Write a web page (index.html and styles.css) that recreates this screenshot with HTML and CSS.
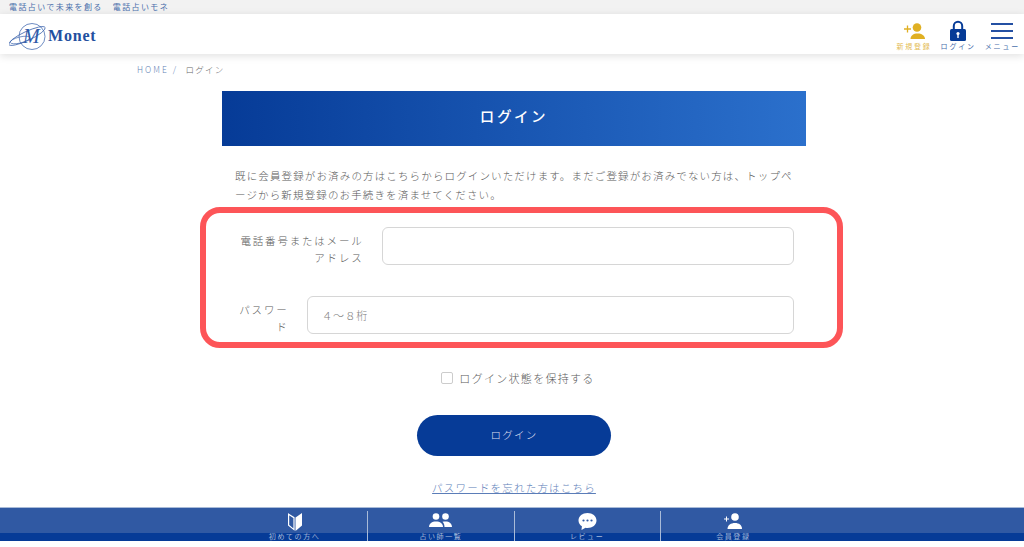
FILE: index.html
```html
<!DOCTYPE html>
<html lang="ja">
<head>
    <meta charset="UTF-8">
    <meta name="viewport" content="width=device-width, initial-scale=1.0">
    <title>ログイン | 電話占いモネ</title>
    <link rel="stylesheet" href="styles.css">
</head>
<body>
    <div class="topbar">
        <span>電話占いで未来を創る</span>
        <span>電話占いモネ</span>
    </div>

    <header class="header">
        <a class="logo" href="#">
            <svg class="logo-mark" width="38" height="28" viewBox="0 0 38 28">
                <circle cx="23" cy="14.500" r="13" fill="none" stroke="#2f5aa8" stroke-width="0.7"/>
                <ellipse cx="18" cy="14" rx="20" ry="4.500" fill="none" stroke="#2f5aa8" stroke-width="0.7" transform="rotate(-25 18 14)"/>
                <ellipse cx="11" cy="18" rx="10" ry="3" fill="none" stroke="#2f5aa8" stroke-width="0.6" transform="rotate(-14 11 18)"/>
                <text class="logo-m" x="14" y="21">M</text>
            </svg>
            <span class="logo-text">Monet</span>
        </a>
        <nav class="header-nav">
            <a class="header-link is-gold" href="#">
                <svg width="22" height="22" viewBox="0 0 22 22">
                    <circle cx="14" cy="7.500" r="4.300" fill="#e0b023"/>
                    <path d="M7.500 19c0-3.500 3-5.500 7-5.500s7.500 2 7.500 5.500z" fill="#e0b023"/>
                    <path d="M1 9h7M4.500 5.500v7" stroke="#e0b023" stroke-width="1.300"/>
                </svg>
                <span>新規登録</span>
            </a>
            <a class="header-link" href="#">
                <svg width="18" height="22" viewBox="0 0 18 22">
                    <path d="M4.800 10V6a4.200 4.200 0 0 1 8.400 0v4" fill="none" stroke="#063b97" stroke-width="2"/>
                    <rect x="1" y="9" width="16" height="12" rx="1.500" fill="#063b97"/>
                    <circle cx="9" cy="13.500" r="1.600" fill="#fff"/>
                    <rect x="8.300" y="13.500" width="1.400" height="4.500" fill="#fff"/>
                </svg>
                <span>ログイン</span>
            </a>
            <a class="header-link" href="#">
                <svg width="22" height="22" viewBox="0 0 22 22">
                    <path d="M0 4h22M0 11h22M0 18h22" stroke="#2450a3" stroke-width="2"/>
                </svg>
                <span>メニュー</span>
            </a>
        </nav>
    </header>

    <div class="breadcrumb"><a href="#">HOME</a><i>/</i><span>ログイン</span></div>

    <main class="main">
        <h1 class="title">ログイン</h1>
        <p class="lead">既に会員登録がお済みの方はこちらからログインいただけます。まだご登録がお済みでない方は、トップページから新規登録のお手続きを済ませてください。</p>

        <form class="login-form">
            <div class="highlight">
                <div class="field">
                    <label class="field-label label-wide" for="tel">電話番号またはメールアドレス</label>
                    <input class="field-input" type="text" id="tel">
                </div>
                <div class="field">
                    <label class="field-label label-narrow" for="pass">パスワード</label>
                    <input class="field-input" type="password" id="pass" placeholder="４～８桁">
                </div>
            </div>

            <label class="remember"><span class="check"></span>ログイン状態を保持する</label>
            <button class="submit" type="button">ログイン</button>
            <a class="forgot" href="#">パスワードを忘れた方はこちら</a>
        </form>
    </main>

    <nav class="footer-nav">
        <div class="footer-items">
            <a class="footer-item" href="#">
                <svg width="14" height="18" viewBox="0 0 14 18">
                    <path d="M.6 1.200L6 4.700v11.900L.6 12.200z" fill="none" stroke="#fff" stroke-width="1.200"/>
                    <path d="M7.500 4.500L14 0v12.500L7.500 18z" fill="#fff"/>
                </svg>
                <span>初めての方へ</span>
            </a>
            <a class="footer-item" href="#">
                <svg width="23" height="14" viewBox="0 0 23 14">
                    <circle cx="7" cy="3.500" r="3.300" fill="#fff"/>
                    <circle cx="16.500" cy="3.500" r="3.300" fill="#fff"/>
                    <path d="M0 14c0-3.500 3-5.500 7-5.500s7 2 7 5.500z" fill="#fff"/>
                    <path d="M15.500 14c0-2.200-.7-3.900-2-5.200 1-.3 2-.4 3-.4 3.800 0 6.500 2 6.500 5.600z" fill="#fff"/>
                </svg>
                <span>占い師一覧</span>
            </a>
            <a class="footer-item" href="#">
                <svg width="19" height="17" viewBox="0 0 18 17">
                    <path d="M9 0c5 0 9 3 9 7.500S14 15 9 15c-.7 0-1.500-.1-2-.2L3 17l.4-3.700C1.300 12 0 10 0 7.500 0 3 4 0 9 0z" fill="#fff"/>
                    <circle cx="5" cy="7.500" r="1.100" fill="#3059a3"/>
                    <circle cx="9" cy="7.500" r="1.100" fill="#3059a3"/>
                    <circle cx="13" cy="7.500" r="1.100" fill="#3059a3"/>
                </svg>
                <span>レビュー</span>
            </a>
            <a class="footer-item" href="#">
                <svg width="18" height="16" viewBox="0 0 18 16">
                    <circle cx="11" cy="4" r="3.800" fill="#fff"/>
                    <path d="M3.500 16c0-4 3.500-6 7.500-6s7 2 7 6z" fill="#fff"/>
                    <path d="M0 6h5M2.500 3.500v5" stroke="#fff" stroke-width="1"/>
                </svg>
                <span>会員登録</span>
            </a>
        </div>
    </nav>
</body>
</html>
```

FILE: styles.css
```css
* {
    box-sizing: border-box;
}

html, body {
    height: 547px;
    overflow: hidden;
}

body {
    margin: 0;
    background: #fff;
    color: #5a5a5a;
    font-family: "Noto Sans CJK JP", "Noto Sans", sans-serif;
    font-weight: 300;
}

a {
    text-decoration: none;
}

.topbar {
    display: flex;
    gap: 10px;
    height: 14px;
    padding-left: 9px;
    background: #f2f2f2;
    color: #4a6fab;
    font-size: 8px;
    font-weight: 400;
    line-height: 13px;
    letter-spacing: 1.400px;
}

.header {
    display: flex;
    justify-content: space-between;
    align-items: center;
    height: 40px;
    padding: 0 4px 0 9px;
    background: #fff;
    box-shadow: 0 2px 8px rgba(0, 0, 0, 0.12);
}

.logo {
    display: flex;
    align-items: center;
    gap: 1px;
    padding-top: 4px;
}

.logo-m {
    font-family: "Liberation Serif", serif;
    font-style: italic;
    font-size: 20px;
    fill: #2f5aa8;
}

.logo-text {
    color: #23509f;
    font-family: "Liberation Serif", serif;
    font-weight: 700;
    font-size: 16px;
    letter-spacing: 0.800px;
}

.header-nav {
    display: flex;
    align-items: flex-start;
    gap: 9px;
    padding-top: 2px;
}

.header-link {
    display: flex;
    flex-direction: column;
    align-items: center;
    color: #4a6fab;
    font-size: 7px;
    font-weight: 400;
    line-height: 8px;
    letter-spacing: 1.800px;
}

.header-link.is-gold {
    color: #e3bc55;
}

.breadcrumb {
    display: flex;
    gap: 4px;
    height: 22px;
    margin-top: 5px;
    padding-left: 137px;
    color: #666;
    font-size: 8.500px;
    line-height: 20px;
    letter-spacing: 1.300px;
}

.breadcrumb a {
    color: #5f7fb5;
    letter-spacing: 2px;
}

.breadcrumb i {
    margin-right: 4px;
    font-style: normal;
    color: #5f7fb5;
}

.main {
    width: 584px;
    margin: 10px 0 0 222px;
}

.title {
    height: 55px;
    margin: 0;
    background: linear-gradient(90deg, #063b97, #2b70cc);
    color: #fff;
    font-size: 14.500px;
    font-weight: 500;
    line-height: 50px;
    letter-spacing: 2.600px;
    text-align: center;
}

.lead {
    margin: 20px 0 0;
    padding: 0 10px 0 13px;
    font-size: 10.500px;
    line-height: 19px;
    letter-spacing: 1.140px;
}

.login-form {
    display: flex;
    flex-direction: column;
    align-items: center;
}

.highlight {
    display: flex;
    flex-direction: column;
    gap: 31px;
    width: 643px;
    height: 141px;
    margin: 3px 0 0 14px;
    padding: 14px 43px 0 32px;
    border: 6px solid #fd5558;
    border-radius: 20px;
    flex-shrink: 0;
}

.field {
    display: flex;
    align-items: center;
    gap: 19px;
    height: 38px;
}

.field-label {
    padding-top: 6px;
    font-size: 10.500px;
    line-height: 17px;
    letter-spacing: 1.800px;
    text-align: right;
    flex-shrink: 0;
}

.label-wide {
    width: 126px;
    margin-right: -1px;
}

.label-narrow {
    width: 51px;
    margin-right: -1px;
}

.field-input {
    flex: 1;
    min-width: 0;
    height: 38px;
    padding: 0 14px;
    border: 1px solid #d6d6d6;
    border-radius: 6px;
    background: #fff;
    font-family: inherit;
    font-size: 11px;
    font-weight: 300;
    letter-spacing: 0.600px;
}

.field-input::placeholder {
    color: #808080;
}

.remember {
    display: flex;
    align-items: center;
    gap: 6px;
    margin: 21px 0 0 8px;
    font-size: 11px;
    line-height: 18px;
    letter-spacing: 1.300px;
}

.check {
    width: 12px;
    height: 12px;
    border: 1px solid #ccc;
    border-radius: 2px;
}

.submit {
    width: 194px;
    height: 41px;
    margin-top: 28px;
    padding: 0 0 2px;
    border: none;
    border-radius: 21px;
    background: #063b97;
    color: #dde;
    font-family: inherit;
    font-size: 10.500px;
    font-weight: 300;
    letter-spacing: 1.200px;
}

.forgot {
    margin-top: 24px;
    color: #5b7db8;
    font-size: 10.500px;
    line-height: 16px;
    letter-spacing: 1.200px;
    text-decoration: underline;
}

.footer-nav {
    position: fixed;
    left: 0;
    right: 0;
    top: 507px;
    height: 34px;
    background: linear-gradient(#3059a3 25px, #063b97 25px);
    border-top: 1px solid #a9bbd8;
}

.footer-items {
    display: flex;
    width: 584px;
    height: 33px;
    margin-left: 222px;
    padding-top: 3px;
}

.footer-item {
    display: flex;
    flex: 1;
    flex-direction: column;
    align-items: center;
    padding: 2px 0 1px;
    color: #e8edf5;
    font-size: 7px;
    line-height: 8px;
    letter-spacing: 1.600px;
    border-left: 1px solid #a9bbd8;
}

.footer-item span {
    margin-top: auto;
}

.footer-item:first-child {
    border-left: none;
}
```
